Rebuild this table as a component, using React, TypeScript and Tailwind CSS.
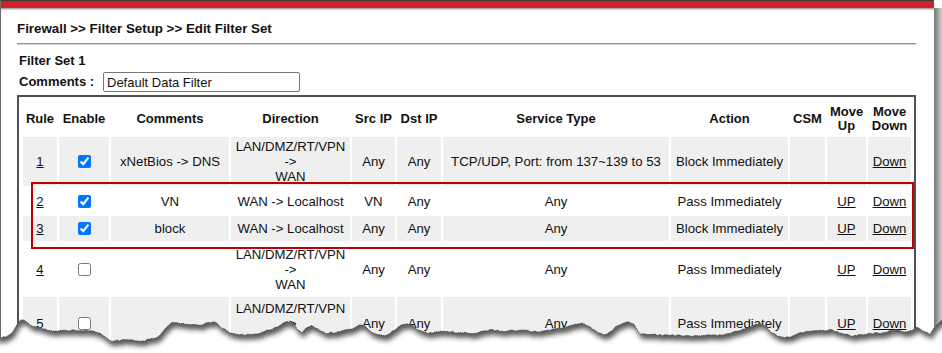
import React from "react";

type FilterRule = {
  no: number;
  enabled: boolean;
  comment: string;
  lanToWan: boolean;
  src: string;
  dst: string;
  service: string;
  action: string;
  canMoveUp: boolean;
  height: string;
  shaded: boolean;
};

const rules: FilterRule[] = [
  { no: 1, enabled: true, comment: "xNetBios -> DNS", lanToWan: true, src: "Any", dst: "Any", service: "TCP/UDP, Port: from 137~139 to 53", action: "Block Immediately", canMoveUp: false, height: "h-[49px]", shaded: true },
  { no: 2, enabled: true, comment: "VN", lanToWan: false, src: "VN", dst: "Any", service: "Any", action: "Pass Immediately", canMoveUp: true, height: "h-[26px]", shaded: false },
  { no: 3, enabled: true, comment: "block", lanToWan: false, src: "Any", dst: "Any", service: "Any", action: "Block Immediately", canMoveUp: true, height: "h-[25px]", shaded: true },
  { no: 4, enabled: false, comment: "", lanToWan: true, src: "Any", dst: "Any", service: "Any", action: "Pass Immediately", canMoveUp: true, height: "h-[52px]", shaded: false },
  { no: 5, enabled: false, comment: "", lanToWan: true, src: "Any", dst: "Any", service: "Any", action: "Pass Immediately", canMoveUp: true, height: "h-[52px]", shaded: true },
];

const headers = ["Rule", "Enable", "Comments", "Direction", "Src IP", "Dst IP", "Service Type", "Action", "CSM", "Move\nUp", "Move\nDown"];

// rough outline of the ripped bottom edge of the page
const EDGE: [number, number][] = [
  [-4, 338], [6, 337], [12, 333], [18, 322], [23, 320], [28, 323], [33, 326], [40, 328], [48, 330], [60, 331], [75, 330], [90, 331],
  [100, 333], [106, 338], [112, 341], [125, 340], [140, 341], [152, 339], [160, 336], [166, 327], [172, 322], [180, 323], [190, 325],
  [200, 325], [208, 323], [215, 322], [222, 328], [230, 333], [245, 335], [260, 333], [272, 329], [280, 325], [288, 321], [293, 323],
  [298, 330], [302, 333], [306, 328], [312, 326], [318, 329], [326, 333], [340, 332], [352, 329], [360, 325], [366, 327], [372, 333],
  [385, 336], [395, 330], [402, 324], [410, 324], [418, 330], [428, 333], [445, 331], [460, 333], [475, 333], [490, 330], [505, 331],
  [520, 330], [540, 332], [555, 329], [566, 327], [575, 324], [582, 323], [590, 327], [598, 333], [606, 335], [615, 328], [622, 323],
  [628, 321], [634, 325], [640, 334], [660, 335], [690, 336], [720, 335], [740, 331], [752, 326], [760, 324], [766, 327], [772, 333],
  [780, 337], [790, 337], [800, 333], [815, 331], [830, 330], [842, 333], [852, 336], [866, 334], [880, 333], [895, 330], [905, 332],
  [912, 331], [917, 327], [922, 330], [930, 334], [936, 325], [946, 318],
];

function roughen(pts: [number, number][]) {
  const out: [number, number][] = [];
  for (let i = 0; i < pts.length - 1; i++) {
    const [x0, y0] = pts[i];
    const [x1, y1] = pts[i + 1];
    const steps = Math.max(1, Math.round((x1 - x0) / 2.5));
    for (let s = 0; s < steps; s++) {
      const t = s / steps;
      const x = x0 + (x1 - x0) * t;
      const n = Math.sin(x * 12.9898 + i) * 43758.5453;
      const jitter = (n - Math.floor(n) - 0.5) * 1.6;
      out.push([x, y0 + (y1 - y0) * t + jitter]);
    }
  }
  out.push(pts[pts.length - 1]);
  return out;
}

function TornEdge() {
  const pts = roughen(EDGE);
  const line = pts.map(([x, y], i) => `${i ? "L" : "M"}${x.toFixed(1)},${y.toFixed(1)}`).join(" ");
  const below = `${line} L946,360 L-4,360 Z`;
  const paper = `M-4,-4 L946,-4 ${[...pts].reverse().map(([x, y]) => `L${x.toFixed(1)},${y.toFixed(1)}`).join(" ")} Z`;
  return (
    <svg className="pointer-events-none absolute left-0 top-0" width={942} height={353} viewBox="0 0 942 353">
      <defs>
        <clipPath id="below-edge">
          <path d={below} />
        </clipPath>
        <filter id="soft" x="-5%" y="-5%" width="110%" height="120%">
          <feGaussianBlur stdDeviation="2.4" />
        </filter>
      </defs>
      <path d={below} fill="#ffffff" />
      <g clipPath="url(#below-edge)">
        <path d={paper} fill="#2e2e2e" opacity="0.8" transform="translate(2,5)" filter="url(#soft)" />
      </g>
      <path d={line} fill="none" stroke="#3a3a3a" strokeWidth="0.8" strokeDasharray="1.5 0.8" />
    </svg>
  );
}

function Cell({ rule, children }: { rule: FilterRule; children?: React.ReactNode }) {
  return (
    <div className={`${rule.height} ${rule.shaded ? "bg-[#efefef]" : ""} flex items-center justify-center text-center text-[13.2px] leading-[15px]`}>
      {children}
    </div>
  );
}

function Direction({ lanToWan }: { lanToWan: boolean }) {
  if (!lanToWan) return <>WAN -&gt; Localhost</>;
  return (
    <span>
      LAN/DMZ/RT/VPN
      <br />
      -&gt;
      <br />
      WAN
    </span>
  );
}

export default function App() {
  return (
    <div className="relative h-[353px] w-[942px] overflow-hidden bg-white font-['Liberation_Sans',Arial,sans-serif] text-[#111]">
      <div className="flex h-full items-start">
        <div className="h-full w-[934px] shrink-0 border-l border-[#6a6a6a]">
          <div className="h-px bg-[#3c3c3c]" />
          <div className="h-[7px] bg-[#d0212a]" />
          <div className="h-[2px] bg-linear-to-b from-[#9a9a9a] to-[#e4e4e4]" />

          <div className="pl-[16px]">
            <div className="mt-[11px] h-[15px] text-[13.33px] font-bold leading-[15px]">
              Firewall &gt;&gt; Filter Setup &gt;&gt; Edit Filter Set
            </div>
            <div className="mt-[7px] w-[899px]">
              <div className="h-px bg-[#8e8e8e]" />
              <div className="h-px bg-[#d8d8d8]" />
            </div>

            <div className="mt-[8px] h-[15px] pl-[2px] text-[13px] font-bold leading-[15px]">Filter Set 1</div>
            <div className="mt-[4px] flex h-[20px] items-center pl-[2px] text-[13px]">
              <span className="w-[84px] font-bold">Comments :</span>
              <input
                defaultValue="Default Data Filter"
                className="h-[20px] w-[197px] rounded-[2px] border border-[#767676] px-[3px] text-[13px] text-[#111] outline-none"
              />
            </div>

            <div className="mt-[3px] w-[899px] border-2 border-[#505050] pb-[40px] pl-[4px] pr-[3px] pt-[2px]">
              <div className="grid grid-cols-[34px_50px_118px_119px_43px_44px_226px_117px_35px_39px_43px] gap-[2px]">
                {headers.map((h) => (
                  <div key={h} className="flex h-[36px] items-center justify-center whitespace-pre-line pt-[4px] text-center text-[13px] font-bold leading-[14px]">
                    {h}
                  </div>
                ))}
                {rules.map((r) => (
                  <React.Fragment key={r.no}>
                    <Cell rule={r}>
                      <span className="underline">{r.no}</span>
                    </Cell>
                    <Cell rule={r}>
                      <input type="checkbox" defaultChecked={r.enabled} className="m-0 h-[13px] w-[13px]" />
                    </Cell>
                    <Cell rule={r}>{r.comment}</Cell>
                    <Cell rule={r}>
                      <Direction lanToWan={r.lanToWan} />
                    </Cell>
                    <Cell rule={r}>{r.src}</Cell>
                    <Cell rule={r}>{r.dst}</Cell>
                    <Cell rule={r}>{r.service}</Cell>
                    <Cell rule={r}>{r.action}</Cell>
                    <Cell rule={r} />
                    <Cell rule={r}>{r.canMoveUp && <span className="underline">UP</span>}</Cell>
                    <Cell rule={r}>
                      <span className="underline">Down</span>
                    </Cell>
                  </React.Fragment>
                ))}
              </div>
            </div>
          </div>
        </div>
        <div className="mt-[8px] h-full w-[8px] shrink-0 bg-linear-to-r from-[#767676] to-[#d2d2d2]" />
      </div>

      {/* highlight around rules 2 and 3 */}
      <div className="absolute left-[31px] top-[182px] h-[67px] w-[883px] border-2 border-[#c00000]" />

      <TornEdge />
    </div>
  );
}
